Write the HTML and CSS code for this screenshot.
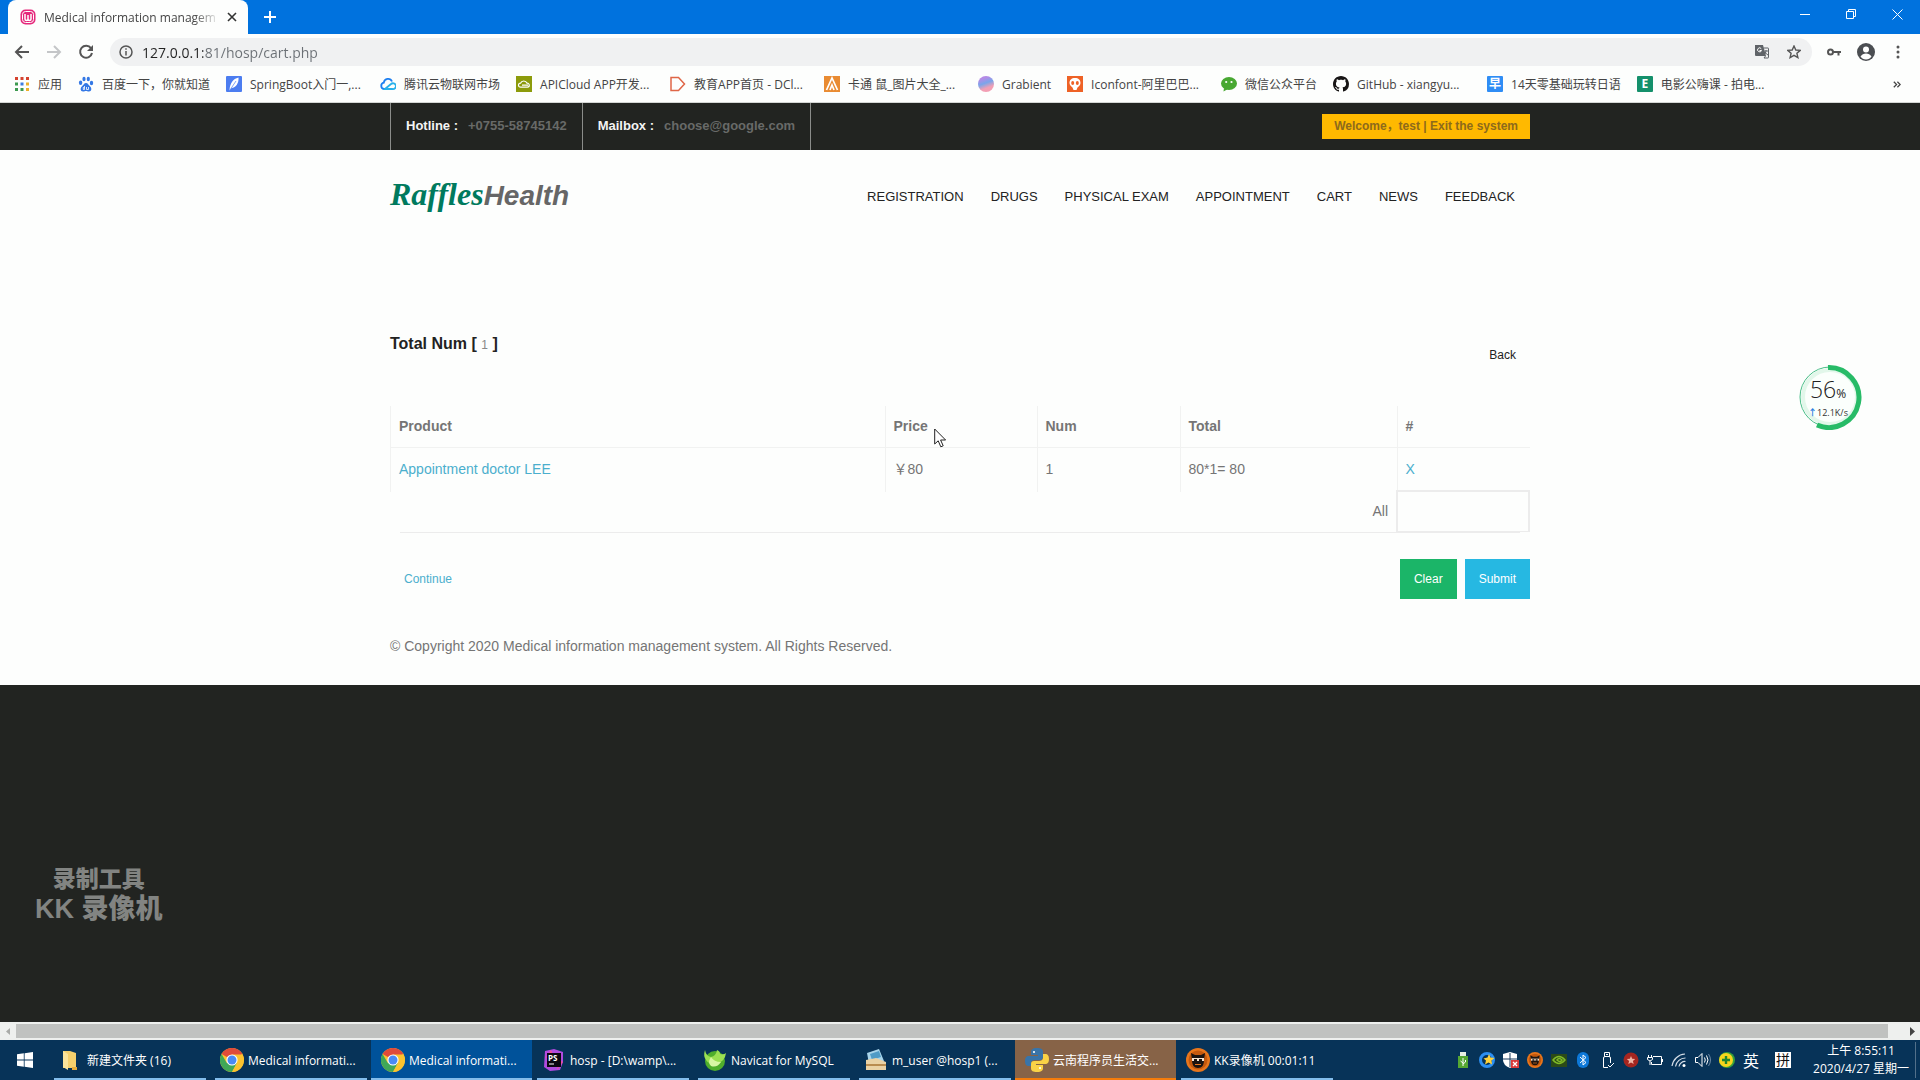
FILE: index.html
```html
<!DOCTYPE html>
<html lang="en">
<head>
<meta charset="utf-8">
<title>Medical information management system</title>
<link rel="stylesheet" href="styles.css">
</head>
<body>
<svg class="defs" aria-hidden="true">
  <symbol id="chrome" viewBox="0 0 24 24">
    <circle cx="12" cy="12" r="12" fill="#fbc32f"/>
    <path d="M12 12 1.600 6A12 12 0 0 1 22.400 6z" fill="#e04b3a"/>
    <path d="M12 12 6.800 15 1.600 6A12 12 0 0 0 12 24l5.200-9z" fill="#3fa757"/>
    <path d="M12 6.500H22.600A12 12 0 0 1 12 24l4.800-9z" fill="#fbc32f"/>
    <circle cx="12" cy="12" r="5.600" fill="#fff"/><circle cx="12" cy="12" r="4.500" fill="#4a8af4"/>
  </symbol>
  <symbol id="mask" viewBox="0 0 24 24">
    <circle cx="12" cy="12" r="12" fill="#e8761c"/><circle cx="12" cy="12" r="9.500" fill="#c4590e"/>
    <path d="M5 5l4 2h6l4-2-1 7c0 5-2 8-6 8s-6-3-6-8z" fill="#1b1411"/>
    <path d="M6 10h12v3H6z" fill="#f7e5d2"/><path d="M8 11h3v2H8zM13 11h3v2h-3z" fill="#1b1411"/>
    <path d="M9 16h6v1H9z" fill="#e8761c"/>
  </symbol>
</svg>

<div class="window">
  <div class="tabstrip">
    <div class="tab">
      <svg class="i16" viewBox="0 0 16 16"><rect x=".5" y=".5" width="15" height="15" rx="5" fill="#e5287b"/><rect x="2.500" y="2.500" width="11" height="11" rx="3" fill="none" stroke="#fff"/><path d="M5 5v5q0 1.500 1.500 1.500T8 10V6v4q0 1.500 1.500 1.500T11 10V5" fill="none" stroke="#fff" stroke-width="1.500"/></svg>
      <span class="tab-title">Medical information managem</span>
      <button class="icon-btn tab-close" aria-label="Close tab"><svg width="10" height="10" viewBox="0 0 10 10"><path d="M1 1l8 8M9 1L1 9" stroke="#333" stroke-width="1.600"/></svg></button>
    </div>
    <button class="icon-btn new-tab" aria-label="New tab"><svg width="14" height="14" viewBox="0 0 14 14"><path d="M7 1v12M1 7h12" stroke="#fff" stroke-width="2"/></svg></button>
    <div class="win-controls">
      <button class="icon-btn" aria-label="Minimize"><svg width="10" height="10" viewBox="0 0 10 10"><path d="M0 5.500h10" stroke="#fff"/></svg></button>
      <button class="icon-btn" aria-label="Restore"><svg width="10" height="10" viewBox="0 0 10 10"><path d="M.5 2.500h7v7h-7zM2.500 2.500v-2h7v7h-2" fill="none" stroke="#fff"/></svg></button>
      <button class="icon-btn" aria-label="Close"><svg width="11" height="11" viewBox="0 0 11 11"><path d="M.5.5l10 10M10.500.5l-10 10" stroke="#fff"/></svg></button>
    </div>
  </div>

  <div class="toolbar">
    <button class="icon-btn" aria-label="Back"><svg width="16" height="16" viewBox="0 0 16 16"><path d="M15 8H2M8 2L2 8l6 6" fill="none" stroke="#555" stroke-width="2"/></svg></button>
    <button class="icon-btn" aria-label="Forward"><svg width="16" height="16" viewBox="0 0 16 16"><path d="M1 8h13M8 2l6 6-6 6" fill="none" stroke="#c4c6c8" stroke-width="2"/></svg></button>
    <button class="icon-btn" aria-label="Reload"><svg width="16" height="16" viewBox="0 0 16 16"><path d="M13 4.200A6 6 0 1 0 14 9" fill="none" stroke="#555" stroke-width="2"/><path d="M15 1v6H9z" fill="#555"/></svg></button>
    <div class="omnibox">
      <svg class="i14" viewBox="0 0 14 14"><circle cx="7" cy="7" r="6" fill="none" stroke="#555" stroke-width="1.500"/><path d="M7 6v4.500M7 3.300v1.500" stroke="#555" stroke-width="1.500"/></svg>
      <input class="url" type="text" aria-label="Address" value="127.0.0.1:81/hosp/cart.php">
      <button class="icon-btn" aria-label="Translate"><svg width="14" height="14" viewBox="0 0 14 14"><path d="M0 0h8l3 11H1q-1 0-1-1z" fill="#5f6368"/><path d="M8.500 3H13q.5 0 .5.500v9q0 .5-.5.500H9l1.500-2M9.500 6H13M11 5v1q0 2-2 4M10 7q1 2 3 3" fill="none" stroke="#5f6368"/><path d="M6.300 3.800A2 2 0 1 0 6.500 5.500H4.500" fill="none" stroke="#fff"/></svg></button>
      <button class="icon-btn" aria-label="Bookmark this page"><svg width="14" height="14" viewBox="0 0 14 14"><path d="M7 1l1.800 4 4.400.4-3.300 2.900 1 4.300L7 10.300l-3.900 2.300 1-4.300L.8 5.400 5.200 5z" fill="none" stroke="#555" stroke-width="1.400"/></svg></button>
    </div>
    <button class="icon-btn" aria-label="Saved passwords"><svg width="14" height="10" viewBox="0 0 14 10"><circle cx="3.500" cy="5" r="2.500" fill="none" stroke="#555" stroke-width="2"/><path d="M6 5h8M11.500 5v3.500" stroke="#555" stroke-width="2"/></svg></button>
    <button class="icon-btn" aria-label="Profile"><svg width="18" height="18" viewBox="0 0 18 18"><circle cx="9" cy="9" r="9" fill="#4b4e52"/><circle cx="9" cy="6.500" r="3" fill="#fff"/><path d="M3.500 13.500q2-3 5.500-3t5.500 3q-2 3-5.500 3t-5.500-3z" fill="#fff"/></svg></button>
    <button class="icon-btn" aria-label="Menu"><svg width="4" height="14" viewBox="0 0 4 14"><g fill="#555"><circle cx="2" cy="2" r="1.500"/><circle cx="2" cy="7" r="1.500"/><circle cx="2" cy="12" r="1.500"/></g></svg></button>
  </div>

  <nav class="bookmarks" aria-label="Bookmarks">
    <a href="#"><svg class="i16" viewBox="0 0 16 16"><path d="M1 1h3v3H1zM6.500 1h3v3h-3zM12 1h3v3h-3z" fill="#d5432f"/><path d="M1 6.500h3v3H1z" fill="#3d9a50"/><path d="M6.500 6.500h3v3h-3z" fill="#3f7de0"/><path d="M12 6.500h3v3h-3zM12 12h3v3h-3z" fill="#eeb02b"/><path d="M1 12h3v3H1zM6.500 12h3v3h-3z" fill="#3d9a50"/></svg><span>应用</span></a>
    <a href="#"><svg class="i16" viewBox="0 0 16 16"><g fill="#3478e5"><ellipse cx="2.600" cy="6.800" rx="1.700" ry="2.200"/><ellipse cx="6" cy="3" rx="1.600" ry="2.300"/><ellipse cx="10.300" cy="3" rx="1.600" ry="2.300"/><ellipse cx="13.500" cy="7" rx="1.700" ry="2.200"/><path d="M8 7c2 0 2.500 2 4 3.300 2 1.700 1.800 5.200-1 5.200-1.500 0-2-.5-3-.5s-1.500.5-3 .5c-2.800 0-3-3.500-1-5.200C5.500 9 6 7 8 7z"/></g><path d="M6.500 10v3.500H5.300v-2h1M8.500 11v2.500h2V11" fill="none" stroke="#fff" stroke-width=".8"/></svg><span>百度一下，你就知道</span></a>
    <a href="#"><svg class="i16" viewBox="0 0 16 16"><rect width="16" height="16" rx="1" fill="#4c7df0"/><path d="M3.500 14.500C4 7 7 3 12.500 1.500 13 7 10 11.500 5.500 12z" fill="#fff"/><path d="M4 14L10 5" stroke="#4c7df0" stroke-width=".7"/></svg><span class="long">SpringBoot入门一,...</span></a>
    <a href="#"><svg class="i16" viewBox="0 0 16 16"><path d="M6 13H4a3.200 3.200 0 0 1-.2-6.300A4.300 4.300 0 0 1 12 5.500" fill="none" stroke="#1d7ff0" stroke-width="1.800"/><path d="M5 13l6-5a2.900 2.900 0 1 1 1.500 5z" fill="none" stroke="#27b0ea" stroke-width="1.800"/></svg><span>腾讯云物联网市场</span></a>
    <a href="#"><svg class="i16" viewBox="0 0 16 16"><rect width="16" height="16" fill="#8c9b0b"/><path d="M4.500 11.200a2 2 0 0 1 0-4 3.500 3.500 0 0 1 6.500 0 2 2 0 1 1 .5 4zM6 9.200h6" fill="none" stroke="#fff" stroke-width="1.200"/></svg><span class="long">APICloud APP开发...</span></a>
    <a href="#"><svg class="i16" viewBox="0 0 16 16"><path d="M1 1.500h7.500L14.500 8l-6 6.500H1z" fill="none" stroke="#df6647" stroke-width="1.500"/></svg><span class="long">教育APP首页 - DCl...</span></a>
    <a href="#"><svg class="i16" viewBox="0 0 16 16"><rect width="16" height="16" fill="#e98b32"/><path d="M2.500 14L8 2l5.500 12M6 14l2-5 2 5" fill="none" stroke="#fff" stroke-width="1.700"/></svg><span class="long">卡通 鼠_图片大全_...</span></a>
    <a href="#"><span class="gradient-ball"></span><span>Grabient</span></a>
    <a href="#"><svg class="i16" viewBox="0 0 16 16"><rect width="16" height="16" fill="#ee6226"/><path d="M8 2c3.500 0 5.500 2 5.500 5 0 2.500-2 3.500-3 4.500L9.500 14h-3l-1-2.500C4.500 10.500 2.500 9.500 2.500 7c0-3 2-5 5.500-5z" fill="#fff"/><ellipse cx="5.700" cy="7" rx="1.500" ry="2" fill="#ee6226"/><ellipse cx="10.300" cy="7" rx="1.500" ry="2" fill="#ee6226"/></svg><span class="long">Iconfont-阿里巴巴...</span></a>
    <a href="#"><svg class="i16" viewBox="0 0 16 16"><ellipse cx="8" cy="7.500" rx="8" ry="6.500" fill="#48a832"/><path d="M3 12l-.5 3.500L7 13z" fill="#48a832"/><circle cx="5.200" cy="6" r="1.100" fill="#fff"/><circle cx="10.500" cy="6" r="1.100" fill="#fff"/></svg><span>微信公众平台</span></a>
    <a href="#"><svg class="i16" viewBox="0 0 16 16"><path fill="#171515" d="M8 0C3.580 0 0 3.580 0 8c0 3.540 2.290 6.530 5.470 7.590.4.070.55-.17.55-.38 0-.19-.01-.82-.01-1.490-2.010.37-2.530-.49-2.690-.94-.09-.23-.48-.94-.82-1.130-.28-.15-.68-.52-.01-.53.63-.01 1.080.58 1.230.82.72 1.210 1.870.87 2.330.66.070-.52.28-.87.51-1.070-1.780-.2-3.640-.89-3.640-3.950 0-.87.31-1.590.82-2.150-.08-.2-.36-1.020.08-2.120 0 0 .67-.21 2.200.82.640-.18 1.320-.27 2-.27s1.360.09 2 .27c1.530-1.040 2.200-.82 2.200-.82.44 1.100.16 1.920.08 2.120.51.56.82 1.270.82 2.150 0 3.070-1.870 3.750-3.650 3.950.29.25.54.73.54 1.480 0 1.070-.01 1.930-.01 2.200 0 .21.15.46.55.38A8.010 8.010 0 0 0 16 8c0-4.420-3.580-8-8-8z"/></svg><span class="long">GitHub - xiangyu...</span></a>
    <a href="#"><span class="letter-icon blue">早</span><span>14天零基础玩转日语</span></a>
    <a href="#"><span class="letter-icon green">E</span><span class="long">电影公嗨课 - 拍电...</span></a>
    <button class="icon-btn more" aria-label="More bookmarks"><svg width="8" height="7" viewBox="0 0 10 8"><path d="M1 .5L4.500 4 1 7.500M5.500.5L9 4 5.500 7.500" fill="none" stroke="#444" stroke-width="1.600"/></svg></button>
  </nav>

  <div class="page">
    <div class="topbar">
      <div class="container topbar-row">
        <p class="contact"><strong>Hotline :</strong><span>+0755-58745142</span></p>
        <p class="contact"><strong>Mailbox :</strong><span>choose@google.com</span></p>
        <a class="welcome" href="#">Welcome，test | Exit the system</a>
      </div>
    </div>
    <div class="sheet">
      <header class="container site-header">
        <a class="logo" href="#"><span class="logo-a">Raffles</span><span class="logo-b">Health</span></a>
        <nav class="menu" aria-label="Main">
          <a href="#">REGISTRATION</a><a href="#">DRUGS</a><a href="#">PHYSICAL EXAM</a><a href="#">APPOINTMENT</a><a href="#">CART</a><a href="#">NEWS</a><a href="#">FEEDBACK</a>
        </nav>
      </header>
      <main class="container cart">
        <div class="cart-head">
          <h1>Total Num [ <span>1</span> ]</h1>
          <a href="#">Back</a>
        </div>
        <table>
          <colgroup><col class="c-product"><col class="c-price"><col class="c-num"><col class="c-total"><col class="c-del"></colgroup>
          <thead>
            <tr><th>Product</th><th>Price</th><th>Num</th><th>Total</th><th>#</th></tr>
          </thead>
          <tbody>
            <tr><td><a href="#">Appointment doctor LEE</a></td><td>￥80</td><td>1</td><td>80*1= 80</td><td><a href="#">X</a></td></tr>
          </tbody>
          <tfoot>
            <tr><td colspan="4">All</td><td class="sum"></td></tr>
          </tfoot>
        </table>
        <hr>
        <div class="actions">
          <a href="#">Continue</a>
          <button class="btn clear">Clear</button>
          <button class="btn submit">Submit</button>
        </div>
      </main>
      <footer class="container copyright">© Copyright 2020 Medical information management system. All Rights Reserved.</footer>
    </div>
    <div class="watermark"><span class="wm-small">录制工具</span><span class="wm-large">KK 录像机</span></div>
  </div>

  <div class="scrollbar">
    <svg width="16" height="9" viewBox="0 0 16 9"><path d="M10 1v7L6 4.500z" fill="#a9aba8"/></svg>
    <div class="thumb"></div>
    <svg width="16" height="9" viewBox="0 0 16 9"><path d="M6 0v9l5-4.500z" fill="#444"/></svg>
  </div>
</div>

<div class="taskbar">
  <button class="icon-btn start" aria-label="Start"><svg width="16" height="16" viewBox="0 0 16 16"><path d="M0 2.300L6.800 1.300v6.300H0zM7.600 1.200L16 0v7.600H7.600zM0 8.400h6.800v6.300L0 13.700zM7.600 8.400H16V16l-8.400-1.200z" fill="#fff"/></svg></button>
  <button class="task"><svg class="i24" viewBox="0 0 24 24"><path d="M4 3h7l6 2v15H4z" fill="#f5d06d"/><path d="M4 3l5 3v16l-5-3z" fill="#fbe49b"/><path d="M13 19h5v3h-5z" fill="#e6ad3c"/></svg>新建文件夹 (16)</button>
  <button class="task"><svg class="i24"><use href="#chrome"/></svg>Medical informati...</button>
  <button class="task active"><svg class="i24"><use href="#chrome"/></svg>Medical informati...</button>
  <button class="task"><svg class="i24" viewBox="0 0 24 24"><path d="M3 3l9-2 9 3v10l-3 8-10 1-6-4z" fill="#b04be0"/><path d="M3 10l6-8 3 6zM15 22l6-8-4-2z" fill="#ee4f9c"/><rect x="5" y="5" width="14" height="14" fill="#0b0710"/><text x="6" y="13" class="ps">PS</text><path d="M7 16h5" stroke="#fff"/></svg>hosp - [D:\wamp\...</button>
  <button class="task"><svg class="i24" viewBox="0 0 24 24"><circle cx="12" cy="13" r="10" fill="#4fae2c"/><path d="M2 2q1 6 6 7 5-1 6-7 3 1 3 4 4 1 6-1-1 9-10 11-7 1-10-4Q0 8 2 2z" fill="#9be052"/><path d="M8 9q3 5 10 5-4 6-10 4-4-3 0-9z" fill="#d9f7a4"/></svg>Navicat for MySQL</button>
  <button class="task"><svg class="i24" viewBox="0 0 24 24"><path d="M3 5l12-4 5 12-15 3z" fill="#a8d4ea"/><path d="M6 6l9-3 2 6-9 3z" fill="#4f9bc6"/><path d="M2 12l10-2 10 4v8H2z" fill="#ead2a5"/><path d="M2 16h20v2H2z" fill="#b98c50"/></svg>m_user @hosp1 (...</button>
  <button class="task alert"><svg class="i24" viewBox="0 0 24 24"><path d="M12 0c-5 0-6 2-6 4v3h7v1H4c-3 0-4 2-4 5s1 5 4 5h2v-3c0-2 2-3 4-3h5c2 0 3-1 3-3V4c0-3-2-4-6-4z" fill="#3974a8"/><path d="M12 24c5 0 6-2 6-4v-3h-7v-1h9c3 0 4-2 4-5s-1-5-4-5h-2v4c0 2-2 3-4 3H9c-2 0-3 1-3 3v4c0 3 2 4 6 4z" fill="#fad246"/><circle cx="9" cy="4" r="1.100" fill="#fff"/><circle cx="15" cy="20" r="1.100" fill="#fff"/></svg>云南程序员生活交...</button>
  <button class="task"><svg class="i24"><use href="#mask"/></svg>KK录像机 00:01:11</button>

  <div class="tray">
    <svg class="i16" viewBox="0 0 16 16"><path d="M5 0h6v4H5z" fill="#e8f0e4"/><path d="M3 4h10v12H3z" fill="#55a733"/><path d="M8 14V6M8 11L5.500 9M8 12l2.500-2V8" stroke="#fff" fill="none"/></svg>
    <svg class="i16" viewBox="0 0 16 16"><circle cx="8" cy="8" r="6.500" fill="none" stroke="#2c8ff2" stroke-width="3"/><path d="M10 2l1.500 3.500 4 .5-3 2.500.5 4-3.500-2-3.500 2 1-4-2.500-2 4-1z" fill="#ffd23a"/></svg>
    <svg class="i16" viewBox="0 0 16 16"><path d="M7 0l7 2v6q0 5-7 8-7-3-7-8V2z" fill="#fff"/><path d="M7 1v14M0 7h14" stroke="#193a5e"/><rect x="8" y="8" width="8" height="8" fill="#d83a3a"/><path d="M10 10l4 4M14 10l-4 4" stroke="#fff" stroke-width="1.300"/></svg>
    <svg class="i16"><use href="#mask"/></svg>
    <svg class="i16" viewBox="0 0 16 16"><rect y="2" width="16" height="13" fill="#2b4a18"/><path d="M2 8q6-7 12 0-6 7-12 0zm4 0q2-3 5 0-2 3-5 0z" fill="none" stroke="#7fb928" stroke-width="1.500"/></svg>
    <svg class="i16" viewBox="0 0 16 16"><rect x="2" width="12" height="16" rx="6" fill="#0d78d8"/><path d="M5 5l6 5.500L8 13V3l3 2.500L5 11" fill="none" stroke="#fff"/></svg>
    <svg class="i16" viewBox="0 0 16 16"><path d="M5.500 4.500v-4h5v4M9 15.500H4.500V6q0-1.500 1.500-1.500h4q1.500 0 1.500 1.500v5M7 2.500h2M9 13l2 2 4-4" fill="none" stroke="#fff"/></svg>
    <svg class="i16" viewBox="0 0 16 16"><circle cx="8" cy="8" r="7.500" fill="#a52620"/><path d="M8 4l1.200 2.700 3 .3-2.300 2 .8 3L8 10.500 5.300 12l.8-3-2.300-2 3-.3z" fill="#f0b4a4"/></svg>
    <svg class="i16" viewBox="0 0 16 16"><path d="M6 4.500h8.500v8H4.500V10M15.500 7v3M1.500 3v3M4.500 3v3M.5 5.500h5v2q-2.500 3-5 0zM3 9v4" fill="none" stroke="#fff"/></svg>
    <svg class="i16" viewBox="0 0 16 16"><path d="M1 14A14 14 0 0 1 14 2M4.500 14.500A10 10 0 0 1 14.500 6M8 14.500a6 6 0 0 1 6.500-5" fill="none" stroke="#d4dde6" stroke-width="1.200"/><circle cx="13" cy="13.500" r="1.500" fill="#fff"/></svg>
    <svg class="i16" viewBox="0 0 16 16"><path d="M.5 5.500H3l4-4v13l-4-4H.5zM9.500 5.500q1.500 2.500 0 5M11.500 3.500q3 4.500 0 9" fill="none" stroke="#fff"/><path d="M13.500 2q4 6 0 12" fill="none" stroke="#6d88a3"/></svg>
    <svg class="i16" viewBox="0 0 16 16"><circle cx="8" cy="8" r="8" fill="#36a03b"/><circle cx="7" cy="8" r="7" fill="#f7d51d"/><path d="M7 4v8M3 8h8" stroke="#20852d" stroke-width="2.400"/></svg>
    <span class="ime">英</span>
    <span class="ime-mode">拼</span>
    <div class="clock"><span>上午 8:55:11</span><span>2020/4/27 星期一</span></div>
  </div>
</div>

<div class="speed">
  <svg class="ring" viewBox="0 0 66 66"><circle cx="32" cy="33" r="30" fill="#fbfffc" stroke="#48bd87"/><circle cx="32" cy="33" r="27" fill="none" stroke="#e2f7ea" stroke-width="4"/><path d="M30 3.500a30 30 0 1 1-11 57.500" fill="none" stroke="#27bb67" stroke-width="5"/></svg>
  <div class="speed-text"><span class="percent">56<small>%</small></span><span class="rate"><b>↑</b>12.1K/s</span></div>
</div>
<svg class="cursor" width="13" height="20" viewBox="0 0 13 20"><path d="M.7 1v15l3.500-3.200 2.600 6 2.400-1-2.600-5.800h5z" fill="#fff" stroke="#222"/></svg>
</body>
</html>
```
FILE: styles.css
```css
* { box-sizing: border-box; }
body {
  margin: 0;
  min-height: 100vh;
  display: flex;
  flex-direction: column;
  position: relative;
  background: #222421;
  font-family: "Open Sans", "Noto Sans CJK SC", sans-serif;
  font-size: 12px;
  color: #444;
}
a { text-decoration: none; color: inherit; }
p, h1 { margin: 0; }
svg { display: block; flex: none; }
.defs { position: absolute; width: 0; height: 0; }
.i14 { width: 14px; height: 14px; }
.i16 { width: 16px; height: 16px; }
.i24 { width: 24px; height: 24px; }
.icon-btn {
  display: flex;
  align-items: center;
  justify-content: center;
  flex: none;
  width: 32px;
  height: 28px;
  padding: 0;
  border: 0;
  background: none;
}

.window { flex: 1; display: flex; flex-direction: column; }

/* browser chrome */
.tabstrip { display: flex; height: 34px; padding-left: 8px; background: #0072de; }
.tab {
  display: flex;
  align-items: center;
  width: 240px;
  padding: 0 4px 0 12px;
  border-radius: 8px 8px 0 0;
  background: #fdfefd;
}
.tab-title {
  flex: 1;
  margin-left: 8px;
  white-space: nowrap;
  mask-image: linear-gradient(90deg, #000 85%, transparent);
}
.tab-close { width: 24px; }
.new-tab { width: 44px; height: 34px; }
.win-controls { display: flex; margin-left: auto; }
.win-controls .icon-btn { width: 46px; }

.toolbar {
  display: flex;
  align-items: center;
  height: 36px;
  padding: 0 6px;
  background: #fdfefd;
}
.omnibox {
  flex: 1;
  display: flex;
  align-items: center;
  height: 28px;
  margin: 0 6px 0 8px;
  padding: 0 2px 0 9px;
  border-radius: 14px;
  background: #f0f1f2;
}
.url {
  flex: 1;
  min-width: 0;
  margin-left: 9px;
  padding: 0;
  border: 0;
  font: 14px "Open Sans", sans-serif;
  color: transparent;
  background: linear-gradient(90deg, #222 61px, #6b7075 61px);
  background-clip: text;
}
.bookmarks {
  display: flex;
  align-items: center;
  gap: 16px;
  height: 33px;
  padding: 0 8px 4px 14px;
  border-bottom: 1px solid #d4d6d4;
  background: #fdfefd;
  white-space: nowrap;
}
.bookmarks a { display: flex; align-items: center; gap: 8px; }
.long { width: 114px; }
.more { width: 30px; margin-left: auto; }
.gradient-ball {
  width: 16px;
  height: 16px;
  border-radius: 8px;
  background: linear-gradient(160deg, #b48be6 20%, #7aa5ea 45%, #f29fb4 70%);
}
.letter-icon {
  width: 16px;
  height: 16px;
  border-radius: 1px;
  font-weight: 700;
  line-height: 16px;
  text-align: center;
  color: #fff;
}
.blue { background: #2f8df5; }
.green { background: #14906b; }

/* site */
.page {
  flex: 1;
  display: flex;
  flex-direction: column;
  position: relative;
  background: #222421;
  font-family: "Liberation Sans", "Noto Sans CJK SC", sans-serif;
  font-size: 14px;
  line-height: 20px;
  color: #757575;
}
.container { width: 100%; max-width: 1140px; margin: 0 auto; }
.topbar-row { display: flex; align-items: center; height: 47px; font-size: 13px; font-weight: 700; }
.contact {
  display: flex;
  gap: 10px;
  height: 47px;
  padding: 0 15px;
  border-right: 1px solid #8b8d8a;
  line-height: 46px;
  color: #686a68;
}
.contact:first-child { border-left: 1px solid #8b8d8a; }
.contact strong { color: #f4f4f4; }
.welcome {
  margin-left: auto;
  padding: 0 12px;
  background: #ffb900;
  line-height: 25px;
  font-size: 12px;
  color: #8d6a1c;
}
.sheet { background: #fdfefd; }
.site-header { display: flex; justify-content: space-between; align-items: center; height: 94px; }
.logo { display: flex; align-items: baseline; padding-bottom: 4px; line-height: 36px; font-weight: 700; font-style: italic; }
.logo-a { font-family: "Liberation Serif", serif; font-size: 32px; color: #007a5e; }
.logo-b { font-size: 28px; color: #666; }
.menu { display: flex; gap: 27px; padding-right: 15px; font-size: 13px; color: #222; }

.cart { padding-top: 88px; }
.cart-head { display: flex; justify-content: space-between; height: 35px; margin-bottom: 39px; line-height: 24px; color: #222; }
.cart-head h1 { font-size: 16px; }
.cart-head h1 span { font-size: 12px; font-weight: 400; color: #888; }
.cart-head a { align-self: flex-end; padding-right: 14px; font-size: 12px; }

table { width: 100%; table-layout: fixed; border-collapse: collapse; }
.c-price { width: 152px; }
.c-num { width: 143px; }
.c-total { width: 217px; }
.c-del { width: 132px; }
th, td { height: 44px; padding: 0 8px; border: 1px solid #f1f2f1; text-align: left; }
th { height: 41px; border-top: 0; }
th:last-child, tbody td:last-child { border-right-color: transparent; }
tbody td { border-bottom-color: transparent; }
td a, .actions a { color: #4bafcd; }
tfoot td { height: 40px; border: 0; text-align: right; }
tfoot .sum { border: 2px solid #ececec; border-bottom-width: 1px; }
hr { height: 1px; margin: 0 10px; border: 0; background: #ececec; }
.actions { display: flex; align-items: center; gap: 8px; margin-top: 26px; font-size: 12px; }
.actions a { margin-right: auto; padding-left: 14px; }
.btn { height: 40px; padding: 0 14px; border: 0; font: 12px "Liberation Sans", sans-serif; color: #fff; }
.clear { background: #1bb568; }
.submit { background: #26b8e2; }
.copyright { padding: 37px 0 29px; }

.watermark {
  position: absolute;
  left: 35px;
  bottom: 98px;
  display: flex;
  flex-direction: column;
  align-items: center;
  font-weight: 900;
  line-height: 30px;
  color: #828482;
}
.wm-small { font-size: 23px; }
.wm-large { font-size: 27px; }

.scrollbar { display: flex; align-items: center; height: 18px; background: #eef0ee; }
.thumb { flex: 1; height: 14px; margin-right: 16px; background: #c0c2c0; }

/* desktop */
.taskbar { display: flex; height: 40px; background: #073358; color: #fff; }
.start { width: 49px; height: 40px; padding-left: 0; }
.task {
  display: flex;
  align-items: center;
  gap: 4px;
  width: 161px;
  height: 40px;
  padding: 0 0 0 10px;
  border: 0;
  background: linear-gradient(#83bdeb, #83bdeb) center bottom / 152px 2px no-repeat;
  font: 12px "Open Sans", "Noto Sans CJK SC", sans-serif;
  color: #fff;
  white-space: nowrap;
}
.task.active { background: linear-gradient(#83bdeb, #83bdeb) center bottom / 100% 2px no-repeat #00529a; }
.task.alert { background: linear-gradient(#f57c0b, #f57c0b) center bottom / 100% 2px no-repeat #876347; }
.ps { font: 700 8px "Open Sans", sans-serif; fill: #fff; }
.tray { display: flex; align-items: center; gap: 8px; margin-left: auto; padding-right: 4px; }
.ime { font-size: 16px; }
.ime-mode { width: 16px; margin: 0 8px; background: #fff; font-size: 14px; line-height: 16px; text-align: center; color: #111; }
.clock {
  display: flex;
  flex-direction: column;
  align-items: center;
  padding: 0 6px;
  border-right: 1px solid #52708a;
  line-height: 18px;
  white-space: nowrap;
}

/* floating network meter and pointer */
.speed { position: absolute; right: 56px; top: 364px; width: 66px; height: 66px; }
.ring { width: 66px; height: 66px; }
.speed-text {
  position: absolute;
  inset: 12px 6px 0 0;
  display: flex;
  flex-direction: column;
  align-items: center;
  color: #333;
}
.percent { font-size: 23px; font-weight: 300; line-height: 26px; color: #222; }
.percent small { font-size: 12px; font-weight: 400; }
.rate { font-size: 9px; line-height: 12px; }
.rate b { color: #2c7fe0; }
.cursor { position: absolute; left: 934px; top: 428px; }
```
